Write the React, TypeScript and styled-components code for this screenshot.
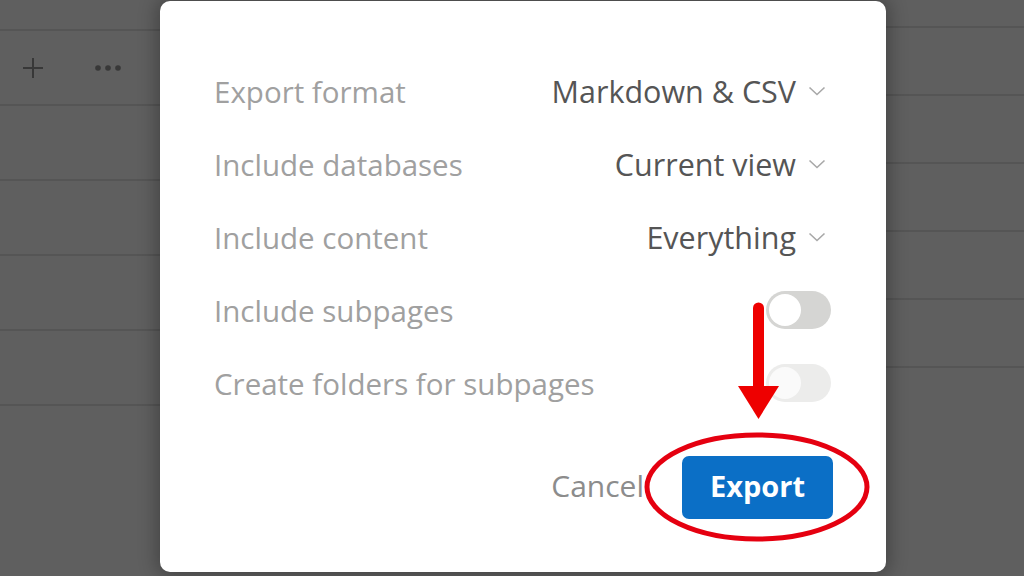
import React from "react";
import styled, { createGlobalStyle } from "styled-components";

const Global = createGlobalStyle`
  html, body { margin: 0; padding: 0; background: #5e5e5e; }
  body { font-family: "Open Sans", "Noto Sans", Arial, sans-serif; }
  #root { width: 1024px; height: 576px; overflow: hidden; }
`;

const Page = styled.div`
  width: 1024px;
  height: 576px;
  display: flex;
  background: #5f5f5f;
  position: relative;
  overflow: hidden;
`;

const Side = styled.div<{ $w: number; $first: number; $row: number }>`
  width: ${(p) => p.$w}px;
  flex: ${(p) => (p.$w ? "none" : "1")};
  display: flex;
  flex-direction: column;
  position: relative;
  & > div { height: ${(p) => p.$row}px; }
  & > div:first-child { height: ${(p) => p.$first}px; }
`;

const BgRow = styled.div`
  box-sizing: border-box;
  border-bottom: 2px solid #555555;
  flex: none;
  display: flex;
  align-items: center;
`;

const ToolIcons = styled.div`
  display: flex;
  align-items: center;
  gap: 50px;
  padding-left: 22px;
  color: #3a3a3a;
`;

const Modal = styled.div`
  width: 726px;
  height: 571px;
  margin-top: 1px;
  flex: none;
  background: #ffffff;
  border-radius: 10px;
  box-shadow: 0 0 18px 4px rgba(0, 0, 0, 0.28);
  box-sizing: border-box;
  padding: 53px 55px 0 54px;
  display: flex;
  flex-direction: column;
  position: relative;
  z-index: 1;
`;

const Row = styled.div`
  height: 73px;
  display: flex;
  align-items: center;
  justify-content: space-between;
`;

const Label = styled.span`
  font-size: 29.5px;
  color: #a0a0a0;
  margin-top: 2px;
`;

const Value = styled.span`
  display: flex;
  align-items: center;
  gap: 12px;
  font-size: 30.5px;
  color: #555555;
  padding-right: 5px;
`;

const Toggle = styled.div<{ $disabled?: boolean }>`
  width: 65px;
  height: 38px;
  border-radius: 19px;
  background: ${(p) => (p.$disabled ? "#ececeb" : "#d5d5d3")};
  display: flex;
  align-items: center;
  padding-left: 3px;
  box-sizing: border-box;
`;

const Knob = styled.div<{ $disabled?: boolean }>`
  width: 32px;
  height: 32px;
  border-radius: 50%;
  background: ${(p) => (p.$disabled ? "#fafafa" : "#ffffff")};
`;

const Footer = styled.div`
  margin-top: 37px;
  display: flex;
  justify-content: flex-end;
  align-items: center;
  gap: 38px;
`;

const Cancel = styled.span`
  font-size: 30px;
  color: #8c8c8c;
  margin-top: -4px;
`;

const ExportButton = styled.div`
  width: 151px;
  height: 63px;
  border-radius: 7px;
  background: #0b6fc6;
  color: #ffffff;
  font-weight: 700;
  font-size: 29px;
  display: flex;
  align-items: center;
  justify-content: center;
  padding-bottom: 5px;
  box-sizing: border-box;
  margin-right: -2px;
`;

const Annotation = styled.svg`
  position: absolute;
  left: 0;
  top: 0;
  pointer-events: none;
  z-index: 2;
`;

const Chevron = () => (
  <svg width="18" height="10" viewBox="0 0 18 10">
    <path d="M1.5 1.5 L9 8.5 L16.5 1.5" fill="none" stroke="#a8a8a8" strokeWidth="1.6" />
  </svg>
);

const rows = [
  { label: "Export format", value: "Markdown & CSV" },
  { label: "Include databases", value: "Current view" },
  { label: "Include content", value: "Everything" },
];

export default function App() {
  return (
    <>
      <Global />
      <Page>
        <Side $w={160} $first={31} $row={75}>
          <BgRow />
          <BgRow>
            <ToolIcons>
              <svg width="22" height="22" viewBox="0 0 22 22">
                <path d="M11 1 V21 M1 11 H21" stroke="#383838" strokeWidth="2" />
              </svg>
              <svg width="28" height="8" viewBox="0 0 28 8">
                <circle cx="4" cy="4" r="2.8" fill="#383838" />
                <circle cx="14" cy="4" r="2.8" fill="#383838" />
                <circle cx="24" cy="4" r="2.8" fill="#383838" />
              </svg>
            </ToolIcons>
          </BgRow>
          <BgRow />
          <BgRow />
          <BgRow />
          <BgRow />
        </Side>
        <Modal>
          {rows.map((r) => (
            <Row key={r.label}>
              <Label>{r.label}</Label>
              <Value>
                {r.value}
                <Chevron />
              </Value>
            </Row>
          ))}
          <Row>
            <Label>Include subpages</Label>
            <Toggle>
              <Knob />
            </Toggle>
          </Row>
          <Row>
            <Label>Create folders for subpages</Label>
            <Toggle $disabled>
              <Knob $disabled />
            </Toggle>
          </Row>
          <Footer>
            <Cancel>Cancel</Cancel>
            <ExportButton>Export</ExportButton>
          </Footer>
        </Modal>
        <Side $w={0} $first={28} $row={68}>
          <BgRow />
          <BgRow />
          <BgRow />
          <BgRow />
          <BgRow />
          <BgRow />
        </Side>
        <Annotation width="1024" height="576" viewBox="0 0 1024 576">
          <ellipse cx="757" cy="487" rx="110" ry="52" fill="none" stroke="#e50010" strokeWidth="5" />
          <line x1="758.5" y1="308" x2="758.5" y2="390" stroke="#ee0000" strokeWidth="11" strokeLinecap="round" />
          <polygon points="738,386 779,386 758.5,419" fill="#ee0000" />
        </Annotation>
      </Page>
    </>
  );
}
